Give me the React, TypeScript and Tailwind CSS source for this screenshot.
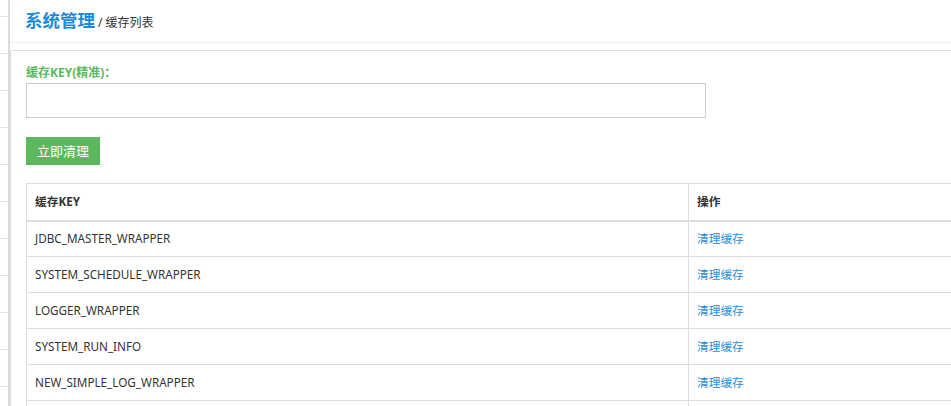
import React from "react";

const rows = [
  "JDBC_MASTER_WRAPPER",
  "SYSTEM_SCHEDULE_WRAPPER",
  "LOGGER_WRAPPER",
  "SYSTEM_RUN_INFO",
  "NEW_SIMPLE_LOG_WRAPPER",
  "",
];

export default function App() {
  const font = { fontFamily: '"Noto Sans", "Noto Sans CJK SC", sans-serif' };
  return (
    <div
      className="w-[951px] h-[406px] flex bg-white overflow-hidden text-[#333]"
      style={font}
    >
      {/* left strip */}
      <div className="w-[10px] shrink-0 flex">
        <div className="w-[8px] flex flex-col">
          <div className="h-[17px] border-b border-[#e3e3e3] shrink-0" />
          {Array.from({ length: 11 }).map((_, i) => (
            <div key={i} className="h-[37px] border-b border-[#e3e3e3] shrink-0" />
          ))}
        </div>
        <div className="w-[2px] bg-[#dcdcdc]" />
      </div>

      {/* main */}
      <div className="flex-1 flex flex-col min-w-0">
        <div className="h-[43px] shrink-0 border-b border-[#eeeeee] pl-[15px] pt-[6px] flex items-baseline gap-[3px]">
          <span className="text-[17.5px] font-bold text-[#1e8ad6] leading-[28px]">系统管理</span>
          <span className="text-[12px] text-[#333]">/ 缓存列表</span>
        </div>
        <div className="h-[7px] shrink-0" />
        <div className="flex-1 border-t border-l border-[#dddddd] pl-[15px] pt-[13px]">
          <div className="text-[12px] font-bold text-[#5cb85c] leading-[17px]">缓存KEY(精准)：</div>
          <div className="mt-[2px] w-[680px] h-[35px] border border-[#cccccc]" />
          <button className="mt-[19px] w-[74px] h-[28px] bg-[#5cb85c] text-white text-[13px] leading-[28px] block">
            立即清理
          </button>
          <table className="mt-[18px] w-[960px] border-collapse text-[11.7px]">
            <thead>
              <tr className="h-[37px]">
                <th className="w-[662px] border border-b-2 border-[#dddddd] text-left font-bold pl-[8px] text-[#333]">缓存KEY</th>
                <th className="border border-b-2 border-[#dddddd] text-left font-bold pl-[8px] text-[#333]">操作</th>
              </tr>
            </thead>
            <tbody>
              {rows.map((r, i) => (
                <tr key={i} className="h-[36px]">
                  <td className="border border-[#dddddd] pl-[8px] text-[#333]">{r}</td>
                  <td className="border border-[#dddddd] pl-[8px] text-[#2b8cd6]">{r ? "清理缓存" : ""}</td>
                </tr>
              ))}
            </tbody>
          </table>
        </div>
      </div>
    </div>
  );
}
